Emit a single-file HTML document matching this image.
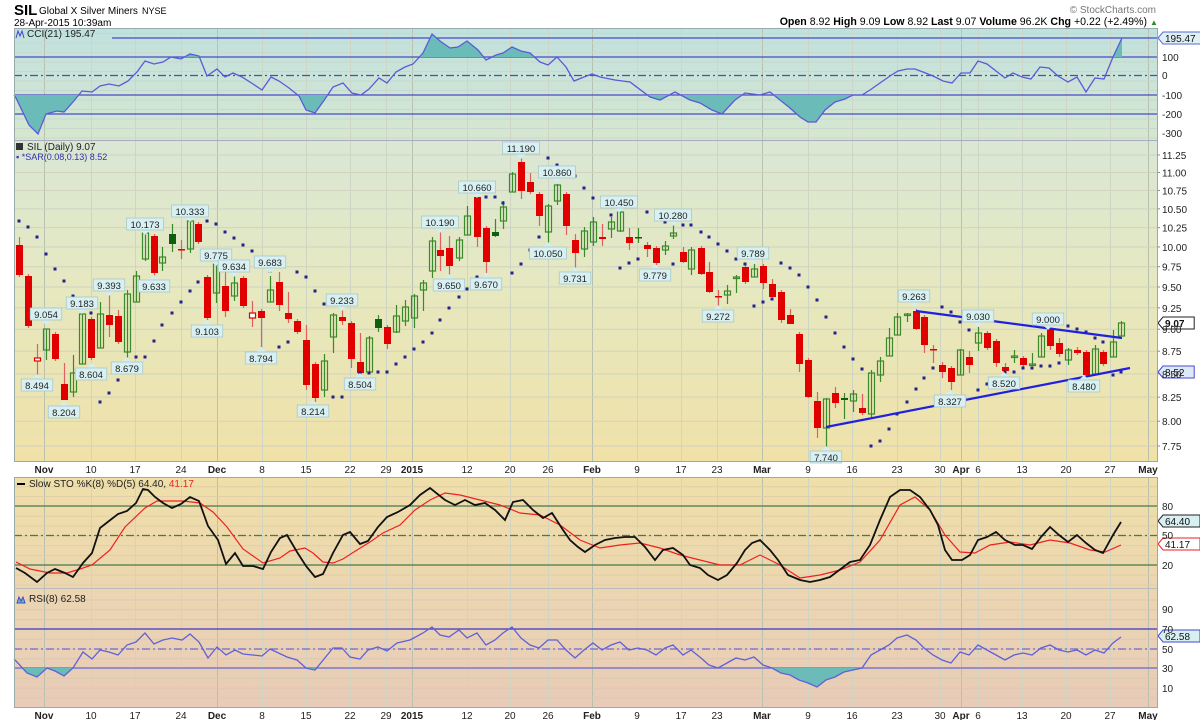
<!DOCTYPE html>
<html><head><meta charset="utf-8"><style>
html,body{margin:0;padding:0;background:#fff;width:1200px;height:720px;overflow:hidden}
svg{display:block;font-family:"Liberation Sans",sans-serif}
</style></head><body>
<svg id="s" width="1200" height="720" viewBox="0 0 1200 720" xmlns="http://www.w3.org/2000/svg">
<defs>
<linearGradient id="gc" x1="0" y1="0" x2="0" y2="1"><stop offset="0" stop-color="#c0e1df"/><stop offset="1" stop-color="#d6e7d0"/></linearGradient>
<linearGradient id="gp" x1="0" y1="0" x2="0" y2="1"><stop offset="0" stop-color="#d9e7d5"/><stop offset="0.45" stop-color="#e6e8c0"/><stop offset="1" stop-color="#f0e1a8"/></linearGradient>
<linearGradient id="gs" x1="0" y1="0" x2="0" y2="1"><stop offset="0" stop-color="#efdfa8"/><stop offset="1" stop-color="#ecd6b0"/></linearGradient>
<linearGradient id="gr" x1="0" y1="0" x2="0" y2="1"><stop offset="0" stop-color="#ecd6b2"/><stop offset="1" stop-color="#e8cbb8"/></linearGradient>
<clipPath id="cTop"><rect x="14" y="28" width="1143" height="29"/></clipPath>
<clipPath id="cBot"><rect x="14" y="95" width="1143" height="45"/></clipPath>
<clipPath id="rBot"><rect x="14" y="668" width="1143" height="40"/></clipPath>
</defs>
<rect x="14" y="28" width="1143" height="112" fill="url(#gc)"/>
<rect x="14" y="140" width="1143" height="322" fill="url(#gp)"/>
<rect x="14" y="477" width="1143" height="111" fill="url(#gs)"/>
<rect x="14" y="588" width="1143" height="120" fill="url(#gr)"/>
<g id="grid"></g>
<g id="lev"></g>
<g id="draw"></g>
<g fill="none" stroke="#9aa" stroke-width="1">
<rect x="14.5" y="28.5" width="1143" height="433"/>
<line x1="14" y1="140.5" x2="1157" y2="140.5" stroke="#aab"/>
<rect x="14.5" y="477.5" width="1143" height="230"/>
<line x1="14" y1="588.5" x2="1157" y2="588.5" stroke="#bbb"/>
</g>
<text x="14" y="15" font-size="15" font-weight="bold" fill="#000">SIL</text>
<text x="39" y="14" font-size="10" fill="#000">Global X Silver Miners</text>
<text x="142" y="14" font-size="9" fill="#000">NYSE</text>
<text x="14" y="26" font-size="10" fill="#000">28-Apr-2015 10:39am</text>
<text x="1156" y="13" font-size="10" fill="#777" text-anchor="end">© StockCharts.com</text>
<text x="1147" y="25" font-size="10.6" fill="#000" text-anchor="end"><tspan font-weight="bold">Open</tspan> 8.92 <tspan font-weight="bold">High</tspan> 9.09 <tspan font-weight="bold">Low</tspan> 8.92 <tspan font-weight="bold">Last</tspan> 9.07 <tspan font-weight="bold">Volume</tspan> 96.2K <tspan font-weight="bold">Chg</tspan> +0.22 (+2.49%)</text>
<text x="1150" y="25" font-size="8" fill="#2a8a2a">▲</text>
<text x="27" y="37" font-size="10" fill="#222">CCI(21) 195.47</text>
<path d="M16 38 l2 -7 l2 5 l2 -5 l2 7" stroke="#44c" fill="none"/>
<text x="27" y="150" font-size="10" fill="#222">SIL (Daily) 9.07</text>
<rect x="16" y="143" width="7" height="7" fill="#333"/>
<text x="16" y="160" font-size="9" fill="#33a">▪ *SAR(0.08,0.13) 8.52</text>
<text x="29" y="487" font-size="10" fill="#222">Slow STO %K(8) %D(5) 64.40, <tspan fill="#e22">41.17</tspan></text>
<line x1="17" y1="484" x2="25" y2="484" stroke="#000" stroke-width="2"/>
<text x="29" y="602" font-size="10" fill="#222">RSI(8) 62.58</text>
<path d="M17 603 l2 -6 l2 4 l2 -4 l2 6z" stroke="#44c" fill="#6bb"/>
<g id="axis" font-size="10" font-weight="bold" fill="#222" text-anchor="middle"></g>
<g id="ry" font-size="10" fill="#222"></g>
</svg>
<script>
var NS="http://www.w3.org/2000/svg";
function el(t,a,p,txt){var e=document.createElementNS(NS,t);for(var k in a)e.setAttribute(k,a[k]);if(txt!=null)e.textContent=txt;(p||document.getElementById('draw')).appendChild(e);return e;}
var G=document.getElementById('grid'),L=document.getElementById('lev'),D=document.getElementById('draw'),AX=document.getElementById('axis'),RY=document.getElementById('ry');
function py(p){return 287-781*Math.log(p/9.5);}
var xl=[["Nov",44,1],["10",91],["17",135],["24",181],["Dec",217,1],["8",262],["15",306],["22",350],["29",386],["2015",412,1],["12",467],["20",510],["26",548],["Feb",592,1],["9",637],["17",681],["23",717],["Mar",762,1],["9",808],["16",852],["23",897],["30",940],["Apr",961,1],["6",978],["13",1022],["20",1066],["27",1110],["May",1148,1]];
xl.forEach(function(l){
 var c=l[2]?"#b8c0b0":"#cfd5c5";
 [[28,462],[477,708]].forEach(function(r){el('line',{x1:l[1]+.5,x2:l[1]+.5,y1:r[0],y2:r[1],stroke:c,'stroke-width':1},G);});
 el('text',{x:l[1],y:473,'font-weight':(l[2]?'bold':'normal')},AX,l[0]);
 el('text',{x:l[1],y:719,'font-weight':(l[2]?'bold':'normal')},AX,l[0]);
});
for(var p=7.75;p<=11.26;p+=0.25){var y=py(p);el('line',{x1:14,x2:1157,y1:y,y2:y,stroke:'#cfd3c0'},G);el('text',{x:1162,y:y+4},RY,p.toFixed(2));el('line',{x1:1157,x2:1160,y1:y,y2:y,stroke:'#888'},G);}
for(var y=138;y>30;y-=9.5)el('line',{x1:14,x2:1157,y1:y,y2:y,stroke:'#c8d8cc'},G);
for(var v=0;v<=100;v+=10){var y=585-v*0.983;el('line',{x1:14,x2:1157,y1:y,y2:y,stroke:'#e0cfa8'},G);}
for(var v=0;v<=100;v+=10){var y=698-v*0.98;el('line',{x1:14,x2:1157,y1:y,y2:y,stroke:'#dcc8b0'},G);}
function lv(y,c,dash,x0){el('line',{x1:x0||14,x2:1157,y1:y,y2:y,stroke:c,'stroke-width':1.3,'stroke-dasharray':dash||''},L);}
lv(38,'#4a4ac8','',112);lv(57,'#4a4ac8');lv(75.5,'#4a4ac8','8,3,2,3');lv(95,'#4a4ac8');lv(114,'#4a4ac8');
lv(506,'#4a7a4a');lv(535.5,'#4a7a4a','8,3,2,3');lv(565,'#4a7a4a');
lv(629,'#3a3ac0');lv(649,'#6a6ad0','8,3,2,3');lv(668,'#6a6ad0');
[["100",57],["0",75],["-100",95],["-200",114],["-300",133]].forEach(function(a){el('text',{x:1162,y:a[1]+4},RY,a[0]);});
[["80",506],["50",535],["20",565]].forEach(function(a){el('text',{x:1162,y:a[1]+4},RY,a[0]);});
[["90",609],["70",629],["50",649],["30",668],["10",688]].forEach(function(a){el('text',{x:1162,y:a[1]+4},RY,a[0]);});
var cci="14,95 16,98 29,125 38,134 46,114 57,111 64,112 73,102 82,91 92,92 100,86 109,84 119,86 128,81 137,72 145,61 154,64 163,62 171,57 181,59 190,54 199,56 207,76 217,69 225,77 233,73 242,77 253,84 262,90 271,77 279,81 289,88 299,96 306,110 315,113 325,99 333,87 343,83 352,93 361,95 369,89 379,78 387,83 396,72 405,67 413,64 423,53 432,34 440,41 450,48 458,47 467,41 478,50 486,60 496,55 503,53 512,47 521,51 530,53 540,62 548,65 557,57 566,67 574,81 584,77 592,74 600,77 615,80 630,82 650,97 660,100 675,92 690,100 700,103 712,110 722,114 735,100 745,93 760,95 770,92 780,100 790,108 800,117 808,122 816,122 825,110 835,102 845,99 853,95 862,95 870,90 880,83 890,76 898,71 907,69 915,69 923,72 933,76 943,81 952,83 961,73 970,73 978,61 987,64 996,71 1005,78 1013,73 1022,77 1031,79 1040,67 1049,68 1058,76 1068,82 1077,77 1086,92 1095,78 1104,79 1113,57 1122,38";
el('polygon',{points:"14,57 "+cci+" 1122,57",fill:'#6bbcb8','clip-path':'url(#cTop)'});
el('polygon',{points:"14,95 "+cci+" 1122,95",fill:'#6bbcb8','clip-path':'url(#cBot)'});
el('polyline',{points:cci,fill:'none',stroke:'#5a5ad8','stroke-width':1.3});
var C=[[19,245,275,237,277,'r'],[28,276,326,0,0,'r'],[37,358,361,344,375,'o'],[46,329,350,329,360,'g'],[55,334,359,0,0,'r'],[64,384,400,363,400,'r'],[73,373,392,355,397,'g'],[82,314,364,308,364,'g'],[91,319,358,0,0,'r'],[100,314,348,302,348,'g'],[109,315,325,295,337,'r'],[118,316,342,310,344,'r'],[127,294,352,290,360,'g'],[136,276,302,271,302,'g'],[145,233,259,0,0,'g'],[154,236,273,0,277,'r'],[162,257,263,247,271,'g'],[172,234,244,224,252,'G'],[181,249,250,240,259,'r'],[190,221,249,0,253,'g'],[198,224,242,0,0,'r'],[207,277,318,0,0,'r'],[216,264,293,0,303,'g'],[225,286,311,272,317,'r'],[234,283,296,276,301,'g'],[243,278,306,0,0,'r'],[252,313,318,301,327,'o'],[261,311,318,0,347,'r'],[270,290,302,276,302,'g'],[279,282,305,272,311,'r'],[288,313,319,292,323,'r'],[297,321,332,0,0,'r'],[306,340,385,325,390,'r'],[315,364,398,0,402,'r'],[324,361,390,354,397,'g'],[333,315,337,0,353,'g'],[342,317,321,309,325,'r'],[351,323,359,0,368,'r'],[360,362,373,333,375,'r'],[369,338,372,336,372,'g'],[378,319,328,315,332,'G'],[387,327,344,0,349,'r'],[396,316,332,305,333,'g'],[405,307,321,300,326,'g'],[414,296,318,294,328,'g'],[423,283,290,280,311,'g'],[432,241,271,237,278,'g'],[440,250,256,232,271,'r'],[449,248,266,236,276,'r'],[459,240,258,237,261,'g'],[467,216,235,206,235,'g'],[477,197,237,0,247,'r'],[486,228,262,0,273,'r'],[495,232,236,219,237,'G'],[503,207,221,201,229,'g'],[512,174,192,172,192,'g'],[521,162,191,158,199,'r'],[530,182,192,173,194,'r'],[539,194,216,0,226,'r'],[548,206,232,204,243,'g'],[557,185,201,184,205,'g'],[566,194,226,192,235,'r'],[575,240,253,234,268,'r'],[584,231,249,227,257,'g'],[593,222,242,217,246,'g'],[602,237,239,224,246,'r'],[611,222,229,217,238,'g'],[620,212,231,210,232,'g'],[629,237,243,228,250,'r'],[638,237,238,228,243,'G'],[647,245,249,242,257,'r'],[656,248,263,0,265,'r'],[665,246,250,241,255,'g'],[673,233,236,225,239,'g'],[683,252,262,247,263,'r'],[691,250,269,247,275,'g'],[701,248,274,0,275,'r'],[709,272,292,262,293,'r'],[718,296,297,290,307,'r'],[727,291,295,285,304,'g'],[736,277,278,275,293,'g'],[745,267,282,0,0,'r'],[754,269,277,264,277,'g'],[763,266,283,0,289,'r'],[772,284,297,279,297,'r'],[781,292,320,0,323,'r'],[790,315,324,309,324,'r'],[799,334,364,0,372,'r'],[808,360,397,0,398,'r'],[817,401,428,392,438,'r'],[826,399,428,398,447,'g'],[835,393,403,387,408,'r'],[844,398,400,393,419,'G'],[853,394,401,390,412,'g'],[862,408,413,394,415,'r'],[871,373,414,370,418,'g'],[880,361,375,357,382,'g'],[889,338,356,328,356,'g'],[897,317,335,313,335,'g'],[907,314,315,313,322,'g'],[916,311,329,309,330,'r'],[924,317,345,0,353,'r'],[933,349,350,345,363,'r'],[942,365,372,362,378,'r'],[951,368,382,0,390,'r'],[960,350,375,349,375,'g'],[969,357,365,351,373,'r'],[978,333,343,327,351,'g'],[987,333,348,0,0,'r'],[996,341,363,0,367,'r'],[1005,367,371,363,373,'r'],[1014,356,357,350,363,'g'],[1023,358,365,0,0,'r'],[1032,364,365,353,366,'g'],[1041,336,357,333,357,'g'],[1050,329,346,0,350,'r'],[1059,343,354,338,357,'r'],[1068,350,360,0,365,'g'],[1077,350,353,347,355,'r'],[1086,352,375,0,0,'r'],[1095,349,374,345,374,'g'],[1103,352,364,0,0,'r'],[1113,342,357,330,357,'g'],[1121,323,336,321,336,'g']];
C.forEach(function(c){
 var x=c[0],t=c[1],b=c[2],wt=c[3]||t-2,wb=c[4]||b+2,k=c[5];
 var col=(k=='r'||k=='o')?'#e00000':(k=='G'?'#0f5f0f':'#3a8a2a');
 el('line',{x1:x+.5,x2:x+.5,y1:wt,y2:wb,stroke:(k=='r'||k=='o')?'#e06060':'#3a8a2a','stroke-width':1.2});
 var h=Math.max(b-t,1.5);
 if(k=='g')el('rect',{x:x-2.5,y:t,width:6,height:h,fill:'none',stroke:col,'stroke-width':1.2});
 else if(k=='o')el('rect',{x:x-2.5,y:t,width:6,height:Math.max(h,3),fill:'#fff',stroke:col,'stroke-width':1.2});
 else el('rect',{x:x-3,y:t,width:7,height:h,fill:col});
});
var S=[[19,221],[28,227],[37,237],[46,254],[55,269],[64,281],[73,296],[91,313],[100,402],[109,393],[118,380],[136,357],[145,357],[154,341],[162,325],[172,313],[181,302],[190,291],[198,282],[207,221],[216,224],[225,232],[234,238],[243,245],[252,251],[261,260],[270,271],[279,347],[288,342],[297,272],[306,277],[315,291],[324,304],[333,397],[342,397],[360,373],[369,373],[378,372],[387,372],[396,364],[405,357],[414,349],[423,342],[432,333],[440,320],[449,308],[459,297],[467,289],[477,277],[486,197],[495,197],[503,203],[512,273],[521,264],[530,250],[539,237],[548,158],[557,165],[575,176],[584,188],[593,198],[602,206],[611,215],[620,268],[629,263],[638,259],[647,212],[656,216],[665,222],[673,264],[683,225],[691,225],[701,232],[709,237],[718,244],[727,251],[736,259],[745,264],[754,306],[763,302],[772,299],[781,263],[790,268],[799,275],[808,287],[817,300],[826,317],[835,333],[844,347],[853,359],[862,369],[871,446],[880,441],[889,429],[897,414],[907,402],[916,389],[924,378],[933,368],[942,307],[951,312],[960,322],[969,330],[978,390],[987,384],[1005,372],[1014,372],[1023,368],[1032,368],[1041,366],[1050,366],[1059,363],[1068,326],[1077,329],[1086,332],[1095,338],[1103,342],[1113,375],[1121,372]];
S.forEach(function(s){el('rect',{x:s[0]-1.5,y:s[1]-1.5,width:3,height:3,fill:'#22228a'});});
el('line',{x1:916,y1:311,x2:1122,y2:338,stroke:'#2020e0','stroke-width':2.2});
el('line',{x1:826,y1:427,x2:1130,y2:368,stroke:'#2020e0','stroke-width':2.2});
var H=[["9.054",46,314],["9.183",82,303],["9.393",109,285],["10.173",145,224],["10.333",190,211],["9.775",216,255],["9.634",234,266],["9.683",270,262],["9.233",342,300],["10.190",440,222],["10.660",477,187],["11.190",521,148],["10.860",557,172],["10.450",619,202],["10.280",673,215],["9.789",753,253],["9.263",914,296],["9.030",978,316],["9.000",1048,319]];
var Lo=[["8.494",37,385],["8.204",64,412],["8.604",91,374],["8.679",127,368],["9.633",154,286],["9.103",207,331],["8.794",261,358],["8.214",313,411],["8.504",360,384],["9.650",449,285],["9.670",486,284],["10.050",548,253],["9.731",575,278],["9.779",655,275],["9.272",718,316],["7.740",826,457],["8.327",950,401],["8.520",1004,383],["8.480",1084,386]];
function co(a,up){var x=a[1],y=a[2],w=a[0].length*5.3+5;
 if(up)el('path',{d:'M'+(x-5)+' '+(y+6)+' L'+x+' '+(y+11)+' L'+(x+5)+' '+(y+6)+'z',fill:'#d4eef0'});
 else el('path',{d:'M'+(x-5)+' '+(y-6)+' L'+x+' '+(y-11)+' L'+(x+5)+' '+(y-6)+'z',fill:'#d4eef0'});
 el('rect',{x:x-w/2,y:y-6,width:w,height:12,fill:'#d8f0f2',stroke:'#a8c8c8','stroke-width':.8});
 el('text',{x:x,y:y+4,'font-size':9.5,'text-anchor':'middle',fill:'#222'},null,a[0]);}
H.forEach(function(a){co(a,true);});Lo.forEach(function(a){co(a,false);});
var K="16,568 25,573 37,582 47,573 55,569 65,573 73,577 83,563 92,553 100,528 109,521 118,514 127,511 136,503 143,489 148,490 155,497 163,503 172,508 181,504 190,497 199,501 208,526 218,540 226,564 235,553 243,566 253,566 263,569 271,552 280,538 287,535 297,552 306,566 315,577 323,574 333,553 343,535 350,532 360,544 368,541 378,527 387,517 398,512 410,505 420,495 430,488 445,500 455,505 465,500 475,505 485,503 495,510 505,520 513,502 523,500 533,510 543,518 552,513 563,530 570,540 578,547 585,552 595,545 605,540 615,538 625,537 635,537 645,547 655,560 663,550 673,548 683,555 690,565 700,568 708,575 718,580 727,575 737,563 745,550 752,543 760,540 770,550 778,560 788,575 800,580 810,582 820,580 830,577 842,568 850,562 860,560 870,545 880,520 890,497 900,490 910,490 920,497 930,510 938,525 945,550 952,560 962,560 970,555 978,540 987,537 996,532 1005,540 1015,545 1023,545 1032,549 1041,537 1050,527 1059,535 1068,542 1077,535 1086,543 1095,550 1103,553 1113,535 1121,522";
var Dd="16,562 30,569 50,573 67,573 80,569 92,565 110,550 125,527 145,508 157,501 183,501 200,503 213,512 227,527 243,549 263,563 280,558 290,551 305,548 313,553 323,562 333,563 343,559 357,550 370,542 383,533 400,525 415,510 430,500 445,493 460,495 480,500 500,505 520,513 540,515 560,525 580,540 600,548 620,545 640,543 660,548 680,555 700,560 720,565 740,565 760,555 780,565 800,578 820,575 840,570 860,562 880,540 900,505 915,497 930,510 945,535 960,552 975,553 990,545 1010,542 1030,545 1050,540 1070,543 1090,550 1105,552 1121,545";
el('polyline',{points:Dd,fill:'none',stroke:'#f02020','stroke-width':1.2});
el('polyline',{points:K,fill:'none',stroke:'#111','stroke-width':1.8});
var R="14,659 16,661 27,673 37,677 47,668 55,671 64,676 73,668 83,652 92,659 100,650 109,652 118,655 127,645 136,642 145,633 154,644 163,640 172,638 182,640 190,634 199,642 208,658 217,647 226,655 235,650 243,654 262,656 270,649 287,657 297,660 306,668 315,670 333,648 342,648 350,657 360,659 368,650 378,647 387,651 397,643 410,640 423,633 432,627 440,635 449,637 459,630 467,638 477,633 486,645 495,640 503,633 512,627 521,638 530,645 539,648 548,640 557,640 566,650 575,658 584,650 593,643 602,650 611,645 620,642 629,650 638,648 647,650 656,655 665,648 673,645 683,655 691,650 701,658 709,665 718,668 727,663 736,658 745,660 754,657 763,665 772,668 781,673 790,675 799,680 808,683 817,687 826,680 835,677 844,672 853,670 862,668 871,655 880,650 889,645 897,638 907,635 916,640 924,648 933,655 942,660 951,663 960,652 969,655 978,645 987,650 996,655 1005,660 1014,655 1023,653 1032,655 1041,648 1050,645 1059,650 1068,652 1077,650 1086,655 1095,650 1104,653 1113,643 1121,637";
el('polygon',{points:"14,668 "+R+" 1121,668",fill:'#6bbcb8','clip-path':'url(#rBot)'});
el('polyline',{points:R,fill:'none',stroke:'#6060d8','stroke-width':1.3});
function tag(t,y,st,bg,b){var w=t.length*5.8+8;el('path',{d:'M1158 '+y+' l5 -6 h'+w+' v12 h-'+w+'z',fill:bg,stroke:st,'stroke-width':1});el('text',{x:1165,y:y+4,'font-size':10,fill:'#111','font-weight':b?'bold':'normal'},null,t);}
tag("195.47",38,'#5a6ad0','#dff0f4');tag("9.07",323,'#222','#fff',1);tag("8.52",372,'#4a4ad0','#dde8f8');tag("64.40",521,'#222','#d8f0f2');tag("41.17",544,'#e22','#fff');tag("62.58",636,'#44c','#d8f0f2');
</script>
</body></html>
